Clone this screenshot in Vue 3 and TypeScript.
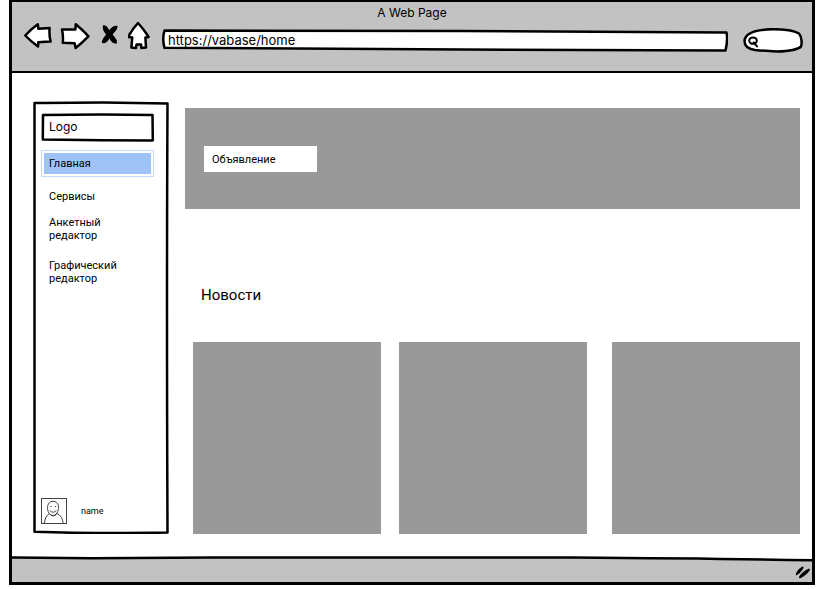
<script setup lang="ts">
import { ref } from 'vue'

interface NavItem {
  label: string
  href: string
}

const address = ref<string>('https://vabase/home')
const query = ref<string>('')
const active = ref<string>('Главная')

const navItems: NavItem[] = [
  { label: 'Главная', href: '#home' },
  { label: 'Сервисы', href: '#services' },
  { label: 'Анкетный редактор', href: '#forms' },
  { label: 'Графический редактор', href: '#graphics' },
]

const newsCards: number[] = [1, 2, 3]
</script>

<template>
  <div class="screen">
    <div class="window">
      <header class="chrome">
        <div class="title">A Web Page</div>
        <div class="toolbar">
          <button class="tool" type="button" aria-label="Назад">
            <svg width="28" height="28" viewBox="0 0 28 28">
              <path class="outline" d="M1.3 13.5 Q7 7 13.8 2.2 L14.4 6.8 L25.6 6 Q25 13 26.6 19.6 L14.4 20.2 L14 24.6 Q7 19.5 1.3 13.5 Z" />
            </svg>
          </button>
          <button class="tool" type="button" aria-label="Вперёд">
            <svg width="30" height="28" viewBox="0 0 30 28">
              <path class="outline" d="M2 7.4 L15.4 7.4 L15.8 2.2 Q22.5 7.6 28.4 14.4 Q22 21 15.6 26 L14.6 21.2 L2.8 20.8 Q3.4 14 2 7.4 Z" />
            </svg>
          </button>
          <button class="tool" type="button" aria-label="Остановить">
            <svg width="22" height="28" viewBox="0 0 22 28">
              <path d="M5 3.2 Q8.6 2.6 11 8.6 Q15 2.6 19.8 4 Q18 9.6 14.2 12.2 Q18.4 16.6 19 21.4 Q14.8 22.6 11.4 16.4 Q8 22.4 3.8 20.8 Q4.4 16 8.2 12.4 Q4 8.4 5 3.2 Z" />
              <path class="cross" d="M7.4 6.2 L16.8 19 M17 6.2 L6.6 18.6" />
            </svg>
          </button>
          <button class="tool" type="button" aria-label="Домой">
            <svg width="22" height="28" viewBox="0 0 22 28">
              <path class="outline" d="M10 1 Q15.6 7 20.6 15 L17.4 15.6 L18 25.4 L13.4 26 L13 22.4 L8.6 22.4 L8 26 L3.4 25.6 L4.2 15.6 L0.2 15 Q4 7.4 10 1 Z" />
            </svg>
          </button>
          <div class="address">
            <svg class="sketch" viewBox="0 0 566 23" preserveAspectRatio="none" aria-hidden="true">
              <path class="outline" d="M2.5 1.5 Q200 1.5 300 2 T564.5 3.5 Q566 11 563.5 21.5 L300 20.5 Q120 20 2.5 18.8 Q0 10 2.5 1.5 Z" />
            </svg>
            <input v-model="address" type="text" aria-label="Адрес" />
          </div>
          <div class="search">
            <svg class="sketch" viewBox="0 0 60 25" preserveAspectRatio="none" aria-hidden="true">
              <path class="outline" d="M1.5 13 C2 5 12 1.5 30 1.2 C44 1.2 51 2.5 56 5.5 C59 9 59 16 58 18.5 C54 22.5 44 23.2 34 23.5 Q22 23 12 22 C5 21 1.5 18 1.5 13 Z" />
            </svg>
            <svg class="lens" width="11" height="12" viewBox="0 0 11 12" aria-hidden="true">
              <ellipse cx="5" cy="4.6" rx="3.8" ry="3.2" />
              <path d="M5.6 6.4 L9 10.4" />
            </svg>
            <input v-model="query" type="search" aria-label="Поиск" />
          </div>
        </div>
      </header>

      <div class="page">
        <aside class="sidebar">
          <svg class="sketch" viewBox="0 0 136 433" preserveAspectRatio="none" aria-hidden="true">
            <path class="outline" d="M1.5 2 L70 1.6 L134.5 2.6 Q133.5 200 134.5 431.5 Q70 432.4 30 431.5 L1.5 430.8 Q0.8 180 1.5 2 Z" />
          </svg>
          <div class="logo">
            <svg class="sketch" viewBox="0 0 113 29" preserveAspectRatio="none" aria-hidden="true">
              <path class="outline" d="M2 2 L60 1.4 L111.5 2 L111.8 27.4 L60 27.2 L1.8 26.4 L2 2 Z" />
            </svg>
            <span>Logo</span>
          </div>
          <nav>
            <a
              v-for="item in navItems"
              :key="item.label"
              :href="item.href"
              :class="{ current: item.label === active }"
              @click.prevent="active = item.label"
            >{{ item.label }}</a>
          </nav>
          <div class="user">
            <svg width="26" height="26" viewBox="0 0 26 26" aria-hidden="true">
              <rect x="0.5" y="0.5" width="25" height="25" />
              <path d="M8.2 15.5 C5.2 11 6 3.3 12 3.3 C18.4 3.3 18.8 11 15.8 15.2 C13.6 18.2 10.4 18 8.2 15.5 Z" />
              <path d="M9.5 8.5 h1.2 M14 8.5 h1.2 M8.8 12.5 Q12 16 15.4 12.4" />
              <path d="M3.4 25.5 Q4 18 8.4 15.6 Q12.4 20.4 16 15.6 Q21.4 18 22.2 25.5" />
            </svg>
            <span>name</span>
          </div>
        </aside>

        <main>
          <section class="banner">
            <div class="notice">Объявление</div>
          </section>
          <h1>Новости</h1>
          <section class="news">
            <article v-for="card in newsCards" :key="card" />
          </section>
        </main>
      </div>

      <footer>
        <svg class="sketch" viewBox="0 0 800 26" preserveAspectRatio="none" aria-hidden="true">
          <path class="fill" d="M0 2 L540 1.5 L800 4 V26 H0 Z" />
          <path class="edge" d="M0 1.5 L80 2.2 L200 1.5 L560 1.5 Q700 2.5 800 4.2" />
        </svg>
        <svg class="grip" width="18" height="16" viewBox="0 0 18 16" aria-hidden="true">
          <path d="M2.8 10 Q4 6 9.4 2.6 Q11.4 2.6 10 5 Q7.6 9 3.6 11.2 Q2.6 11.2 2.8 10 Z" />
          <path d="M6 13 Q8.6 8 15.4 4.8 Q17.8 4.4 16.6 6.6 Q13 11.8 7.2 14.2 Q5.8 14.4 6 13 Z" />
        </svg>
      </footer>
    </div>
  </div>
</template>

<style>
body {
  margin: 0;
  background: #fff;
}
</style>

<style scoped>
* {
  box-sizing: border-box;
}

.screen {
  display: flex;
  min-height: 100vh;
  padding: 0 3px 5px 9px;
  font-family: Roboto, "Noto Sans", sans-serif;
  font-size: 11px;
  line-height: 13px;
  color: #000;
}

.window {
  display: flex;
  flex: 1;
  flex-direction: column;
  min-width: 0;
  border: 3px solid #000;
  border-top-width: 2px;
}

.chrome {
  padding: 3px 9px 18px 12px;
  background: #c2c2c2;
  border-bottom: 2px solid #000;
}

.title {
  padding-right: 3px;
  font-family: Inter, sans-serif;
  font-size: 12px;
  line-height: 16px;
  text-align: center;
}

.toolbar {
  display: flex;
  align-items: flex-start;
  gap: 8px;
  margin-top: 1px;
}

.tool {
  display: block;
  padding: 0;
  border: 0;
  background: none;
  cursor: pointer;
}

.tool svg {
  display: block;
}

.cross {
  fill: none;
  stroke: #000;
  stroke-width: 4px;
  stroke-linecap: round;
}

.outline {
  fill: #fff;
  stroke: #000;
  stroke-width: 2.5px;
  stroke-linejoin: round;
  vector-effect: non-scaling-stroke;
}

.sketch {
  position: absolute;
  inset: 0;
  width: 100%;
  height: 100%;
}

.address {
  position: relative;
  flex: 1;
  height: 23px;
  margin: 7px 7px 0 4px;
}

.search {
  position: relative;
  width: 60px;
  height: 25px;
  margin-top: 6px;
}

.address input,
.search input {
  position: relative;
  display: block;
  width: 100%;
  height: 100%;
  border: 0;
  outline: 0;
  background: none;
  font: inherit;
  color: inherit;
}

.address input {
  padding: 0 6px 2px;
  font-family: Inter, sans-serif;
  font-size: 13px;
}

.search input {
  padding: 0 8px 0 18px;
}

.lens {
  position: absolute;
  top: 8px;
  left: 5px;
  fill: none;
  stroke: #000;
  stroke-width: 2px;
  stroke-linecap: round;
}

.page {
  display: grid;
  flex: 1;
  grid-template-columns: 136px 1fr;
  gap: 16px;
  padding: 28px 12px 22px 21px;
}

.sidebar {
  position: relative;
  display: flex;
  flex-direction: column;
  padding: 12px 15px 10px 8px;
}

.logo {
  position: relative;
  height: 29px;
  padding: 6px 8px;
  font-family: Inter, sans-serif;
  font-size: 12px;
  line-height: 16px;
}

.logo span {
  position: relative;
}

nav {
  position: relative;
  display: flex;
  flex-direction: column;
  align-items: flex-start;
  gap: 13px;
  margin-top: 8px;
}

nav a {
  width: 86px;
  margin-left: 8px;
  color: inherit;
  text-decoration: none;
}

nav a.current {
  width: 100%;
  margin: 0;
  padding: 6px 7px;
  border: 1px solid #c4dbfb;
  outline: 2px solid #fff;
  outline-offset: -3px;
  background: #9fc3f7;
}

nav a:last-child {
  margin-top: 4px;
}

.user {
  position: relative;
  display: flex;
  align-items: center;
  gap: 14px;
  margin-top: auto;
  font-size: 9px;
}

.user svg {
  fill: none;
  stroke: #444;
  stroke-width: 1px;
}

main {
  display: flex;
  flex-direction: column;
  min-width: 0;
  padding-top: 7px;
}

.banner {
  padding: 38px 19px 37px;
  background: #999;
}

.notice {
  width: 113px;
  padding: 7px 8px 6px;
  background: #fff;
}

h1 {
  margin: 76px 16px 37px;
  font-size: 15px;
  font-weight: 400;
  line-height: 20px;
}

.news {
  display: flex;
  flex: 1;
  gap: 18px;
  min-height: 192px;
  padding-left: 8px;
}

.news article {
  flex: 1;
  background: #999;
}

.news article:last-child {
  margin-left: 7px;
}

footer {
  position: relative;
  display: flex;
  align-items: flex-end;
  justify-content: flex-end;
  height: 26px;
  padding: 0 1px 2px 0;
}

.fill {
  fill: #c2c2c2;
}

.edge {
  fill: none;
  stroke: #000;
  stroke-width: 2.5px;
  vector-effect: non-scaling-stroke;
}

.grip {
  position: relative;
}
</style>
